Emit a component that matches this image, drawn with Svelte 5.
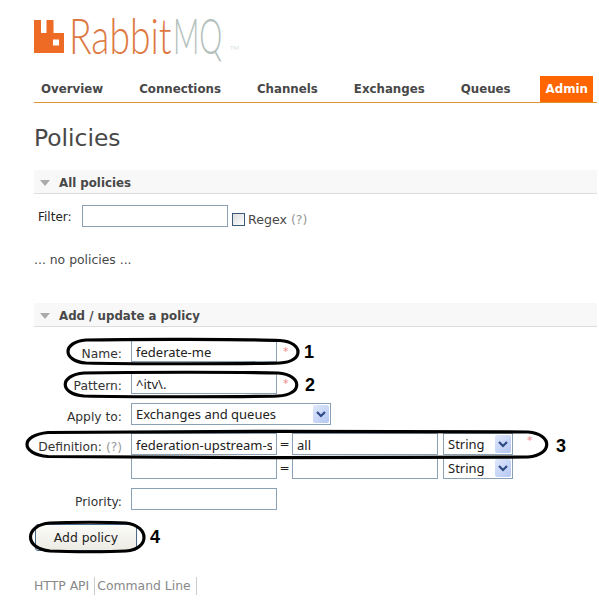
<script lang="ts">
	const tabs = ['Overview', 'Connections', 'Channels', 'Exchanges', 'Queues'];
</script>

<div class="page">
	<div class="logo">
		<svg class="logo-mark" width="30" height="33" viewBox="0 0 30 33">
			<path fill="#ee6b25" fill-rule="evenodd" d="M0 0h7v13h5.500V0h7v13H30v20H0zM19 19.500v6h6v-6z" />
		</svg>
		<span class="logo-rabbit">Rabbit</span><span class="logo-mq">MQ</span><span class="logo-tm">TM</span>
	</div>

	<nav class="tabs">
		{#each tabs as tab}
			<a href="#top" class="tab">{tab}</a>
		{/each}
		<a href="#top" class="tab tab-active">Admin</a>
	</nav>

	<h1>Policies</h1>

	<section class="all">
		<h2><span class="arrow"></span>All policies</h2>
		<div class="filter">
			<label for="filter">Filter:</label>
			<input id="filter" class="text filter-input" type="text" />
			<span class="check"></span>
			<span class="regex">Regex <span class="help">(?)</span></span>
		</div>
		<p class="empty">... no policies ...</p>
	</section>

	<section class="add">
		<h2><span class="arrow"></span>Add / update a policy</h2>
		<form class="form">
			<div class="row">
				<span class="label">Name:</span>
				<input class="text" type="text" value="federate-me" />
				<span class="req">*</span>
			</div>
			<div class="row row-pattern">
				<span class="label">Pattern:</span>
				<input class="text" type="text" value="^itv\." />
				<span class="req">*</span>
			</div>
			<div class="row">
				<span class="label">Apply to:</span>
				<div class="select select-wide">Exchanges and queues<span class="select-btn"><svg width="12" height="8" viewBox="0 0 12 8"><path d="M2 2l4 4 4-4" fill="none" stroke="#2d4a86" stroke-width="2.2" /></svg></span></div>
			</div>
			<div class="row row-def">
				<span class="label">Definition: <span class="help">(?)</span></span>
				<input class="text" type="text" value="federation-upstream-set" />
				<span class="eq">=</span>
				<input class="text" type="text" value="all" />
				<div class="select select-type">String<span class="select-btn"><svg width="12" height="8" viewBox="0 0 12 8"><path d="M2 2l4 4 4-4" fill="none" stroke="#2d4a86" stroke-width="2.2" /></svg></span></div>
				<span class="req req-def">*</span>
			</div>
			<div class="row row-def2">
				<span class="label"></span>
				<input class="text" type="text" />
				<span class="eq">=</span>
				<input class="text" type="text" />
				<div class="select select-type">String<span class="select-btn"><svg width="12" height="8" viewBox="0 0 12 8"><path d="M2 2l4 4 4-4" fill="none" stroke="#2d4a86" stroke-width="2.2" /></svg></span></div>
			</div>
			<div class="row">
				<span class="label">Priority:</span>
				<input class="text" type="text" />
			</div>
			<button type="button" class="submit">Add policy</button>
		</form>
	</section>

	<footer class="links">
		<a href="#top">HTTP API</a>
		<a href="#top">Command Line</a>
	</footer>

	<!-- hand drawn annotations on top of the form -->
	<svg class="marks" width="599" height="610" viewBox="0 0 599 610">
		<g fill="none" stroke="#000" stroke-width="3.2">
			<path d="M86 340C130 339 250 339 280 340.500C304 342 304 362 280 363C250 364 120 364 86 363C62 361 62 342 86 340Z" />
			<path d="M84 373C130 372 250 372 278 373C303 375 303 395 278 396C250 397 120 397 84 396C59 394 59 375 84 373Z" />
			<path d="M48 432.500C170 431 420 431 528 432C553 434 553 455 528 457C420 458 170 458 48 456.500C20 454 20 435 48 432.500Z" />
			<path d="M50 523C70 522 110 522 126 523C150 526 150 549 126 551C110 552 70 552 50 551C24 549 24 525 50 523Z" />
		</g>
	</svg>
	<span class="num num-1">1</span>
	<span class="num num-2">2</span>
	<span class="num num-3">3</span>
	<span class="num num-4">4</span>
</div>

<style>
	:global(body) {
		background: #fff;
		overflow: hidden;
	}

	.page {
		position: relative;
		height: 610px;
		box-sizing: border-box;
		padding: 20px 2px 0 34px;
		font-family: "DejaVu Sans", Verdana, sans-serif;
		font-size: 12px;
		color: #484848;
	}

	/* Header */
	.logo {
		display: flex;
		align-items: flex-end;
		height: 33px;
		font-family: Lato, "Open Sans", sans-serif;
		font-size: 50px;
		font-weight: 300;
		line-height: 33px;
	}

	.logo-mark {
		flex-shrink: 0;
		margin-right: 5px;
	}

	.logo-rabbit {
		display: inline-block;
		width: 104px;
		transform: translateY(-1px) scaleX(0.745);
		transform-origin: left center;
		color: #dd7a43;
	}

	.logo-mq {
		display: inline-block;
		width: 57px;
		transform: translateY(-1px) scaleX(0.58);
		transform-origin: left center;
		color: #b3c0bc;
	}

	.logo-tm {
		font-size: 6px;
		line-height: 10px;
		color: #b3c0bc;
	}

	.tabs {
		display: flex;
		align-items: flex-end;
		gap: 22px;
		height: 26px;
		margin-top: 23px;
		padding-right: 5px;
		border-bottom: 1px solid #e0932f;
	}

	.tab {
		padding: 0 7px;
		height: 26px;
		line-height: 27px;
		font-size: 11.8px;
		font-weight: bold;
		color: #484848;
		text-decoration: none;
	}

	.tab-active {
		margin-left: auto;
		padding: 0 5px 0 6px;
		width: 42px;
		background: #f60;
		color: #fff;
	}

	h1 {
		margin: 20px 0 0;
		font-size: 23.4px;
		font-weight: normal;
		line-height: 30px;
		color: #484848;
	}

	/* Sections */
	h2 {
		display: flex;
		align-items: center;
		gap: 9px;
		box-sizing: border-box;
		height: 24px;
		margin: 0;
		padding: 2px 0 0 6px;
		background: #f8f8f8;
		border-bottom: 1px solid #ddd;
		font-size: 11.8px;
		font-weight: bold;
		color: #484848;
	}

	.arrow {
		width: 0;
		height: 0;
		border-left: 5px solid transparent;
		border-right: 5px solid transparent;
		border-top: 6px solid #aaa;
	}

	.all {
		margin-top: 17px;
	}

	.filter {
		display: flex;
		align-items: center;
		margin: 11px 0 0 4px;
		height: 22px;
		color: #222;
	}

	.filter label {
		width: 44px;
		padding-top: 2px;
	}

	.text {
		box-sizing: border-box;
		width: 146px;
		height: 22px;
		margin: 0;
		padding: 2px 4px 0;
		border: 1px solid #8aa0b4;
		border-radius: 0;
		background: #fff;
		outline: none;
		font-family: "Noto Sans", "DejaVu Sans", sans-serif;
		font-size: 13px;
		color: #222;
	}

	.check {
		box-sizing: border-box;
		width: 13px;
		height: 13px;
		margin: 6px 3px 0 4px;
		border: 1px solid #3a5a78;
		background: linear-gradient(135deg, #ddd, #fff);
	}

	.regex {
		margin-top: 6px;
		color: #484848;
		font-size: 12.6px;
	}

	.help {
		color: #999;
	}

	.empty {
		margin: 25px 0 0;
		line-height: 16px;
		font-size: 12.4px;
	}

	.add {
		margin-top: 35px;
	}

	/* Form */
	.form {
		display: flex;
		flex-direction: column;
		align-items: flex-start;
		gap: 9px;
		margin-top: 13px;
		position: relative;
	}

	.row {
		display: flex;
		align-items: center;
		height: 22px;
		color: #222;
	}

	.row-pattern {
		margin-top: 1px;
	}

	.row-def {
		margin-top: -1px;
	}

	.row-def2 {
		margin-top: -7px;
	}

	.label {
		width: 88px;
		margin-right: 9px;
		text-align: right;
		white-space: nowrap;
		padding-top: 5px;
		font-size: 12.3px;
		color: #333;
	}

	.req {
		margin-left: 6px;
		padding-top: 4px;
		color: #e88;
		font-size: 11px;
		align-self: flex-start;
		line-height: 16px;
	}

	.req-def {
		margin-left: 14px;
		padding-top: 0;
	}

	.eq {
		width: 15px;
		text-align: center;
	}

	.select {
		position: relative;
		box-sizing: border-box;
		height: 22px;
		line-height: 20px;
		padding-left: 4px;
		border: 1px solid #8aa0b4;
		background: #fff;
		font-family: "Noto Sans", "DejaVu Sans", sans-serif;
		font-size: 13px;
		color: #222;
		white-space: nowrap;
	}

	.select-wide {
		width: 200px;
	}

	.select-type {
		width: 70px;
		margin-left: 5px;
	}

	.select-btn {
		position: absolute;
		top: 1px;
		right: 1px;
		bottom: 1px;
		width: 16px;
		display: flex;
		align-items: center;
		justify-content: center;
		border-radius: 2px;
		background: linear-gradient(135deg, #dfe8fb, #b4c7f3);
	}

	.submit {
		box-sizing: border-box;
		width: 102px;
		height: 27px;
		margin: 5px 0 0 1px;
		padding: 0;
		border: 1px solid #4a6a8a;
		border-radius: 3px;
		background: linear-gradient(#fbfbf8, #ecebe4);
		font-family: "DejaVu Sans", Verdana, sans-serif;
		font-size: 12.4px;
		color: #222;
	}

	/* Footer */
	.links {
		display: flex;
		margin-top: 26px;
		line-height: 18px;
		font-size: 12.4px;
	}

	.links a {
		padding-right: 5px;
		margin-right: 2px;
		border-right: 1px solid #ccc;
		color: #888;
		text-decoration: none;
	}

	/* Annotations */
	.marks {
		position: absolute;
		top: 0;
		left: 0;
		pointer-events: none;
	}

	.num {
		position: absolute;
		font-family: "Liberation Sans", Arial, sans-serif;
		font-size: 18px;
		font-weight: bold;
		line-height: 20px;
		color: #000;
	}

	.num-1 { left: 304px; top: 342px; }
	.num-2 { left: 305px; top: 375px; }
	.num-3 { left: 556px; top: 436px; }
	.num-4 { left: 150px; top: 527px; }
</style>
